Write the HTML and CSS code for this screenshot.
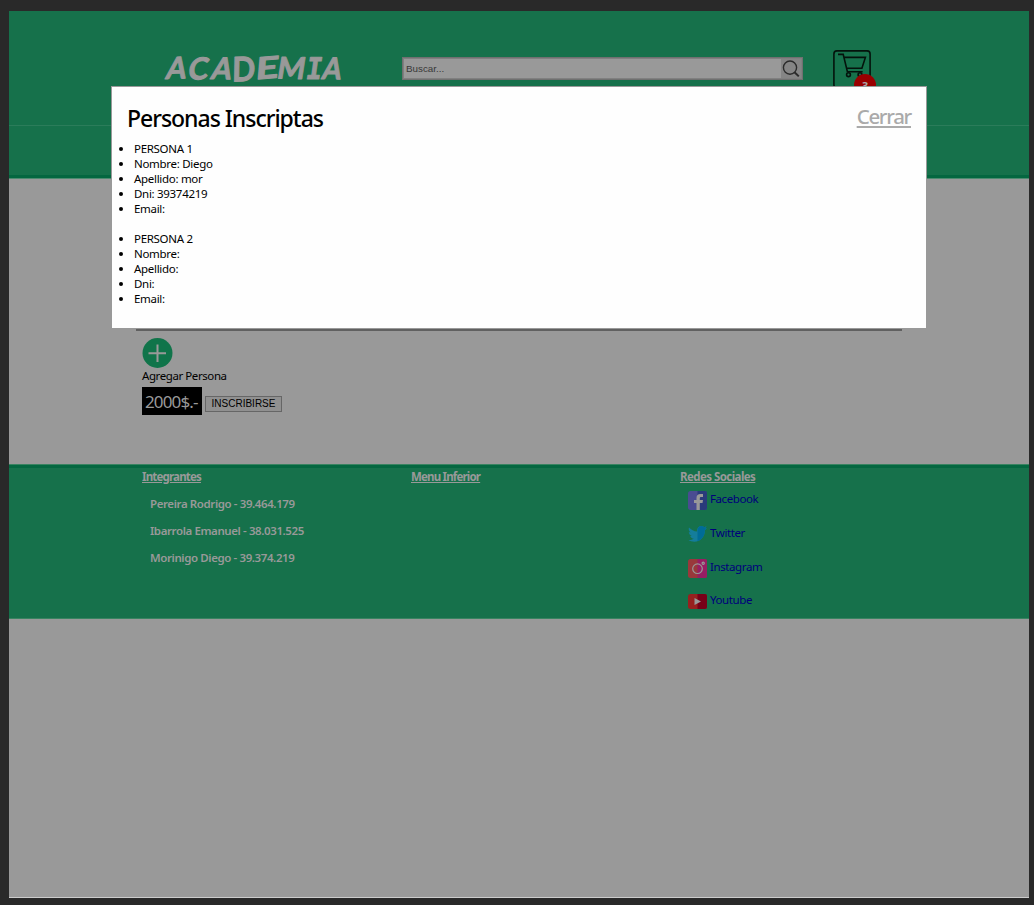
FILE: index.html
```html
<!DOCTYPE html>
<html lang="es">
<head>
<meta charset="utf-8">
<title>Academia</title>
<link rel="stylesheet" href="styles.css">
</head>
<body>
<div class="page">
  <header class="header">
    <div class="header-top">
      <svg class="logo" width="184" height="38" viewBox="0 0 184 38">
        <g class="logo-text">
          <text transform="translate(4 29) rotate(-2) skewX(-12)" textLength="20" lengthAdjust="spacingAndGlyphs">A</text>
          <text transform="translate(26 30) rotate(-3) skewX(-12)" textLength="20" lengthAdjust="spacingAndGlyphs">C</text>
          <text transform="translate(49 29) rotate(1) skewX(-12)" textLength="20" lengthAdjust="spacingAndGlyphs">A</text>
          <text transform="translate(71 31.500) rotate(-2) skewX(-3) scale(1 1.120)" textLength="23" lengthAdjust="spacingAndGlyphs">D</text>
          <text transform="translate(94 29.500) rotate(-5) skewX(-10)" textLength="23" lengthAdjust="spacingAndGlyphs">E</text>
          <text transform="translate(115 28.500) rotate(1) skewX(-8)" textLength="28" lengthAdjust="spacingAndGlyphs">M</text>
          <text transform="translate(144 29) skewX(-8)" textLength="16" lengthAdjust="spacingAndGlyphs" class="logo-serif">I</text>
          <text transform="translate(160 29) rotate(1) skewX(-10)" textLength="19" lengthAdjust="spacingAndGlyphs">A</text>
        </g>
      </svg>
      <div class="search">
        <span class="search-text">Buscar...</span>
        <span class="search-button">
          <svg width="20" height="20" viewBox="0 0 20 20" fill="none" stroke="#2b2b2b" stroke-width="1.4"><circle cx="9" cy="8.6" r="6.6"/><path d="M13.5 13.2l4.3 4.2" stroke-width="2"/></svg>
        </span>
      </div>
      <div class="cart">
        <svg width="38" height="38" viewBox="0 0 38 38" fill="none" stroke="#04130c" stroke-width="1.6"><rect x=".9" y=".9" width="36.2" height="37" rx="3"/><path d="M5 4.400h5.200l4.200 17.300h15.200M11.400 7.400h21l-3.500 10.800H14"/><circle cx="15.500" cy="24.700" r="1.900"/><circle cx="27" cy="24.700" r="1.900"/></svg>
        <span class="badge">3</span>
      </div>
    </div>
    <div class="header-nav"></div>
  </header>

  <main class="main">
    <hr class="divider">
    <div class="enroll">
      <svg class="add" width="31" height="30" viewBox="0 0 31 30"><circle cx="15.500" cy="15" r="15" fill="#10744a"/><path d="M6.500 15.200H24M15.500 6.500V24" stroke="#999" stroke-width="2"/></svg>
      <span class="add-label">Agregar Persona</span>
      <div class="buy"><span class="price">2000$.-</span><button class="submit">INSCRIBIRSE</button></div>
    </div>
  </main>

  <footer class="footer">
    <section class="column">
      <h3 class="column-title">Integrantes</h3>
      <p class="member">Pereira Rodrigo - 39.464.179</p>
      <p class="member">Ibarrola Emanuel - 38.031.525</p>
      <p class="member">Morinigo Diego - 39.374.219</p>
    </section>
    <section class="column">
      <h3 class="column-title">Menu Inferior</h3>
    </section>
    <section class="column">
      <h3 class="column-title column-title-wide">Redes Sociales</h3>
      <div class="social">
        <svg width="19" height="19" viewBox="0 0 19 19"><rect width="19" height="19" rx="2.5" fill="#4a4c91"/><path d="M9.5 0H17a2 2 0 0 1 2 2v15a2 2 0 0 1-2 2H9.5z" fill="#293a7b"/><path d="M8.5 19v-7H6V9h2.500V7c0-2.700 1.400-4 4-4H15v3h-1.500c-1.300 0-1.700.4-1.700 1.500V9H15l-.5 3h-2.700v7z" fill="#999"/></svg>
        <a class="link">Facebook</a>
      </div>
      <div class="social">
        <svg width="19" height="19" viewBox="0 0 19 19"><path d="M1 2.500c2.200 2.400 4.800 3.800 8.200 4C8.700 3.600 10.500 1 13.200 1c1.300 0 2.200.5 2.900 1.200l2.500-.9-1.700 2.300 2-.4-2 2.100c0 6.200-4.200 11.400-10.600 11.400-2.300 0-4.200-.5-5.800-1.600 2.200.1 3.900-.4 5.200-1.500-1.800-.2-3-1.200-3.500-2.700h1.600C2 10.200.9 8.700.8 6.900l1.700.5C.9 6.100.3 4.300 1 2.500z" fill="#147d9b"/><path d="M9.500 5.500C9.500 3 11 1 13.200 1c1.300 0 2.200.5 2.900 1.200l2.500-.9-1.700 2.300 2-.4-2 2.100c0 5.300-2.900 9.600-7.400 11z" fill="#006c97"/></svg>
        <a class="link">Twitter</a>
      </div>
      <div class="social">
        <svg width="19" height="19" viewBox="0 0 19 19"><rect width="19" height="19" rx="2.500" fill="#99383b"/><path d="M9.500 0H17a2 2 0 0 1 2 2v15a2 2 0 0 1-2 2H9.500z" fill="#971d63"/><g fill="none" stroke="#999" stroke-width="1.200"><circle cx="9.500" cy="9.700" r="4.800"/><circle cx="15.200" cy="4.200" r="1.100"/></g></svg>
        <a class="link">Instagram</a>
      </div>
      <div class="social">
        <svg width="19" height="19" viewBox="0 0 19 19"><rect y="2" width="19" height="15" rx="2.500" fill="#97211f"/><path d="M9.500 2H17a2 2 0 0 1 2 2v11a2 2 0 0 1-2 2H9.500z" fill="#780018"/><path d="M6.500 6v7l6.500-3.500z" fill="#999"/></svg>
        <a class="link">Youtube</a>
      </div>
    </section>
  </footer>
</div>

<div class="modal">
  <div class="modal-head">
    <h1 class="modal-title">Personas Inscriptas</h1>
    <a class="close">Cerrar</a>
  </div>
  <ul class="people">
    <li>PERSONA 1</li><li>Nombre: Diego</li><li>Apellido: mor</li><li>Dni: 39374219</li><li>Email:</li>
  </ul>
  <ul class="people">
    <li>PERSONA 2</li><li>Nombre:</li><li>Apellido:</li><li>Dni:</li><li>Email:</li>
  </ul>
</div>
</body>
</html>
```
FILE: styles.css
```css
* { box-sizing: border-box; }
html { background: #292929; }
body {
  margin: 0;
  padding: 11px 5px 7px 9px;
  height: 905px;
  overflow: hidden;
  font: 11.5px/15px "Noto Sans", "Open Sans", sans-serif;
  letter-spacing: -0.3px;
  color: #000;
}
h1, h3, p, ul, hr { margin: 0; padding: 0; }
.page { height: 887px; background: #999; border-bottom: 1px solid #ccc; }
.header {
  height: 168px;
  background: #16714b;
  border-bottom: 1px solid #4d8b70;
  box-shadow: inset 0 -3px #046740;
}
.header-top {
  display: flex;
  align-items: flex-start;
  height: 115px;
  padding: 39px 0 0 152px;
  border-bottom: 1px solid #2b7c5a;
}
.logo { flex: none; overflow: visible; }
.logo-text {
  fill: #999;
  stroke: #999;
  stroke-width: 1;
  stroke-linejoin: round;
  font: 700 30px Lato, sans-serif;
  letter-spacing: 0;
}
.logo-serif { font-family: "DejaVu Sans Mono", monospace; }
.search {
  display: flex;
  align-items: center;
  width: 401px;
  height: 23px;
  margin: 7px 0 0 57px;
  border: 1px solid #707070;
  box-shadow: inset 0 0 0 1px #808080;
  background: #999;
  font: 9.8px/15px "Liberation Sans", sans-serif;
  letter-spacing: 0;
  color: #383838;
}
.search-text { flex: 1; padding-left: 3px; }
.search-button { display: flex; width: 20px; height: 19px; margin-right: 1px; background: #858585; }
.cart { position: relative; width: 38px; height: 38px; margin-left: 30px; }
.badge {
  position: absolute;
  left: 21px;
  top: 24px;
  width: 22px;
  height: 22px;
  border-radius: 50%;
  background: #990000;
  color: #aaa;
  font-size: 11px;
  font-weight: 700;
  line-height: 23px;
  text-align: center;
}
.main { height: 285px; padding: 150px 127px 0; }
.divider { height: 2px; border: 0; background: #606060; }
.enroll { display: flex; flex-direction: column; padding: 7px 0 0 6px; }
.add { display: block; }
.add-label { height: 16px; line-height: 15px; letter-spacing: -.42px; }
.buy { display: flex; align-items: flex-start; margin-top: 3px; }
.price {
  width: 60px;
  height: 28px;
  padding-left: 3px;
  background: #000;
  color: #999;
  font-size: 17px;
  line-height: 29px;
  letter-spacing: -.85px;
}
.submit {
  width: 77px;
  height: 16px;
  margin: 9px 0 0 3px;
  padding: 0;
  border: 1px solid #666;
  background: #909090;
  color: #000;
  font: 10px/14px "Liberation Sans", sans-serif;
}
.footer {
  display: flex;
  height: 155px;
  padding: 4px 0 0 133px;
  background: #16714b;
  border-top: 1px solid #398361;
  border-bottom: 1px solid #398361;
  box-shadow: inset 0 3px #046740;
}
.column { width: 269px; flex: none; }
.column-title {
  height: 19px;
  color: #999;
  font-size: 11.5px;
  line-height: 16px;
  letter-spacing: -.82px;
  text-decoration: underline;
}
.column-title-wide { letter-spacing: -.56px; }
.member {
  height: 27px;
  padding: 8px 0 0 8px;
  color: #999;
  font-weight: 600;
  letter-spacing: -.4px;
  white-space: nowrap;
}
.social { display: flex; height: 33.8px; padding: 3px 0 0 8px; }
.social svg { flex: none; margin-right: 3px; }
.link { color: #00007c; letter-spacing: -.4px; }
.modal {
  position: absolute;
  left: 111px;
  top: 86px;
  width: 816px;
  height: 243px;
  padding: 0 15px;
  background: #fefefe;
  border: 1px solid #999;
}
.modal-head { display: flex; justify-content: space-between; height: 54px; padding-top: 15px; }
.modal-title { font-weight: 500; font-size: 23px; line-height: 33px; letter-spacing: -1.02px; }
.close { color: #aaa; font-size: 20.5px; font-weight: 500; line-height: 29px; letter-spacing: -1.3px; text-decoration: underline; }
.people { margin-bottom: 15px; padding-left: 7px; }
```
